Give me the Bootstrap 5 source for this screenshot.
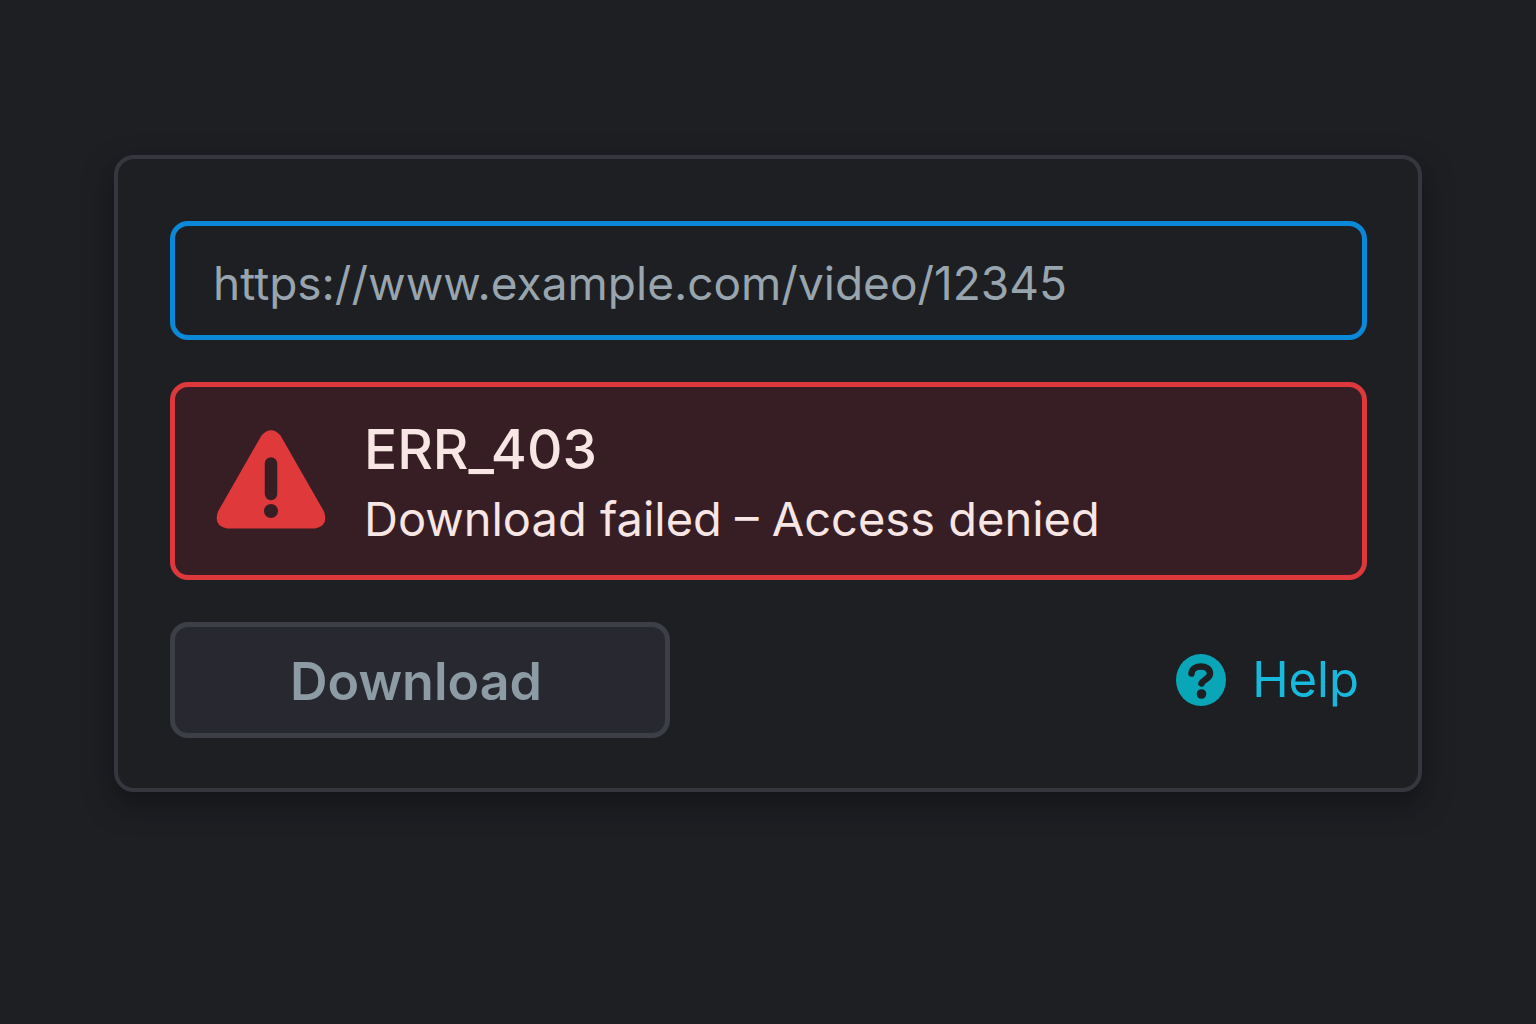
<!DOCTYPE html>
<html lang="en" data-bs-theme="dark">
<head>
<meta charset="utf-8">
<meta name="viewport" content="width=device-width, initial-scale=1">
<title>Video download</title>
<link href="https://cdn.jsdelivr.net/npm/bootstrap@5.3.0/dist/css/bootstrap.min.css" rel="stylesheet">
<style>
  body { background: #1e1f23; font-family: Inter, "Liberation Sans", sans-serif; line-height: 1.2; }
  .page { max-width: 1308px; padding-top: 155px; padding-bottom: 48px; }
  .panel { background: #1e1f23; border: 4px solid #36373e; border-radius: 20px; padding: 62px 51px 50px 52px; box-shadow: 0 12px 28px rgba(8, 9, 14, .5); }
  .stack { gap: 42px; }
  .url-box, .url-box:focus { height: 119px; padding: 4px 38px 0; border: 5px solid #0c88d8; border-radius: 18px; background: #1e1f23; color: #98a5ae; font-size: 46px; font-weight: 400; box-shadow: none; }
  .error-box { height: 198px; padding: 0 41px; gap: 38px; border: 5px solid #dd383c; border-radius: 18px; background: #371e24; color: #f7e6e4; }
  .error-copy { padding-top: 6px; }
  .error-code { font-size: 55px; font-weight: 500; line-height: 70px; }
  .error-text { font-size: 47px; font-weight: 400; line-height: 70px; }
  .btn-download, .btn-download:hover { width: 500px; height: 116px; padding: 4px 8px 0 0; border: 5px solid #3d3f47; border-radius: 18px; background: #272830; color: #8d9ba4; font-size: 52px; font-weight: 600; }
  .help-link, .help-link:hover { gap: 26px; padding-right: 8px; color: #17b9dc; font-size: 49px; font-weight: 400; }
</style>
</head>
<body>
<main class="page container-fluid px-0">
  <form class="panel">
    <div class="stack d-flex flex-column">
      <input class="url-box form-control" type="text" aria-label="Video address" value="https://www.example.com/video/12345">
      <div class="error-box d-flex align-items-center" role="alert">
        <svg class="flex-shrink-0" width="110" height="102" viewBox="0 0 110 102" aria-hidden="true">
          <path fill="#df393b" d="M45.500 5.500Q55-5 64.500 5.500L108 81.500Q113 96 99 98.500H11Q-3 96 2 81.500Z"/>
          <path stroke="#371e24" stroke-width="12.500" stroke-linecap="round" d="M55 33.500v30.500"/>
          <circle cx="55" cy="81" r="7" fill="#371e24"/>
        </svg>
        <div class="error-copy">
          <div class="error-code">ERR_403</div>
          <div class="error-text">Download failed – Access denied</div>
        </div>
      </div>
      <div class="d-flex flex-wrap justify-content-between align-items-center">
        <button class="btn-download btn" type="button">Download</button>
        <a class="help-link d-flex align-items-center text-decoration-none" href="#">
          <svg width="50" height="52" viewBox="0 0 50 52" aria-hidden="true">
            <ellipse cx="25" cy="26" rx="25" ry="26" fill="#09a6b7"/>
            <path fill="none" stroke="#1e1f23" stroke-width="6.500" stroke-linecap="round" stroke-linejoin="round" d="M15.500 19.500C16 10 34 10 34 19.500C34 25 27 25.500 25.500 29.500"/>
            <circle cx="25.500" cy="40" r="4.800" fill="#1e1f23"/>
          </svg>
          <span>Help</span>
        </a>
      </div>
    </div>
  </form>
</main>
<script src="https://cdn.jsdelivr.net/npm/bootstrap@5.3.0/dist/js/bootstrap.bundle.min.js"></script>
</body>
</html>
